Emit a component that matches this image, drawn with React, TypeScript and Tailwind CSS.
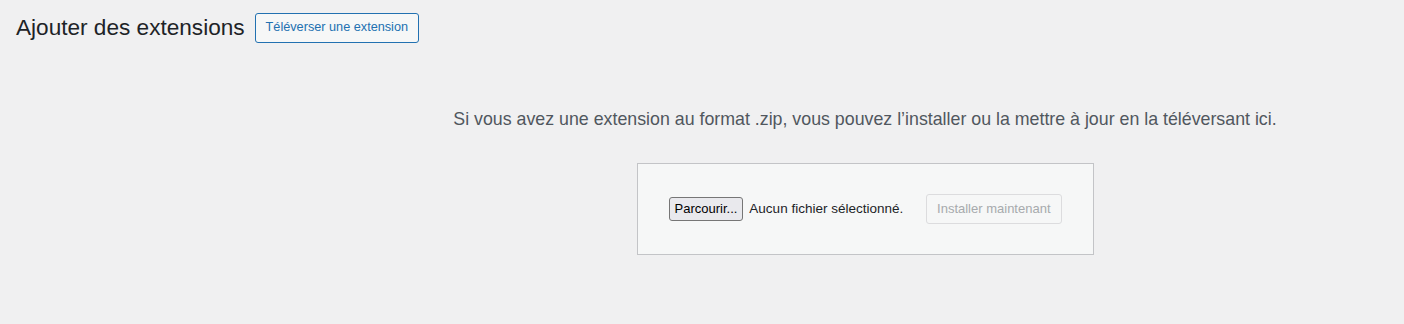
export default function App() {
  return (
    <div
      className="min-h-[324px] w-[1404px] bg-[#f0f0f1] text-[#3c434a]"
      style={{ fontFamily: '"Liberation Sans", Arial, sans-serif' }}
    >
      {/* Header */}
      <div className="flex items-center gap-[10px] pl-4 pt-[13px]">
        <h1 className="text-[22.6px] leading-[30px] font-normal text-[#1d2327]">Ajouter des extensions</h1>
        <button className="h-[30px] rounded-[3px] border border-[#2271b1] bg-[#f6f7f7] px-[10px] text-[12.7px] text-[#2271b1]">
          Téléverser une extension
        </button>
      </div>

      {/* Upload area */}
      <div className="flex flex-col items-center pl-[326px]">
        <p className="mt-[63px] text-[17.8px] leading-[26px] text-[#50575e]">
          Si vous avez une extension au format .zip, vous pouvez l’installer ou la mettre à jour en la téléversant ici.
        </p>
        <div className="mt-[31px] flex w-[457px] items-center border border-[#c3c4c7] bg-[#f6f7f7] px-[31px] py-[30px]">
          <button className="h-[24px] rounded-[3px] border border-[#767676] bg-[#e9e9ed] px-[5px] text-[13px] text-black">
            Parcourir...
          </button>
          <span className="ml-[6px] text-[13.5px] text-[#1d2327]">Aucun fichier sélectionné.</span>
          <button
            disabled
            className="ml-auto h-[30px] rounded-[3px] border border-[#dcdcde] bg-[#f6f7f7] px-[10px] text-[13px] text-[#a7aaad]"
          >
            Installer maintenant
          </button>
        </div>
      </div>
    </div>
  )
}
